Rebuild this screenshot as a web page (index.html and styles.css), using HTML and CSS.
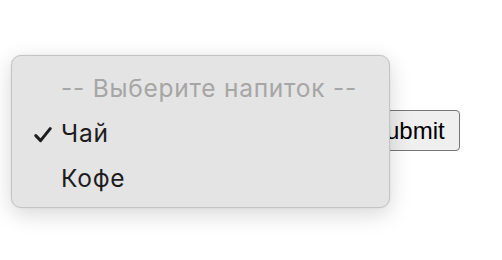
FILE: index.html
```html
<!DOCTYPE html>
<html lang="ru">
<head>
<meta charset="utf-8">
<title>Напиток</title>
<link rel="stylesheet" href="styles.css">
</head>
<body>
<form class="form">
  <div class="select-box"></div>
  <button type="button" class="submit">Submit</button>
</form>
<div class="menu" role="listbox">
  <div class="option placeholder"><span class="mark"></span><span class="label">-- Выберите напиток --</span></div>
  <div class="option"><span class="mark"><svg viewBox="0 0 18 16" width="18" height="16"><path d="M1.8 8.6 L6.6 13.6 L16.2 1.6" fill="none" stroke="#1d1d1d" stroke-width="3" stroke-linecap="round" stroke-linejoin="round"/></svg></span><span class="label">Чай</span></div>
  <div class="option"><span class="mark"></span><span class="label">Кофе</span></div>
</div>
</body>
</html>
```
FILE: styles.css
```css
html, body {
  margin: 0;
  background: #ffffff;
}
body {
  width: 502px;
  height: 260px;
  position: relative;
  overflow: hidden;
  font-family: Inter, "Noto Sans", sans-serif;
}
.form {
  display: flex;
  align-items: center;
  padding: 110px 0 0 12px;
  gap: 6px;
}
.select-box {
  width: 337px;
  height: 41px;
}
.submit {
  box-sizing: border-box;
  height: 41px;
  padding: 0 14px 0 14px;
  border: 1.5px solid #767676;
  border-radius: 4px;
  background: #efefef;
  color: #000;
  font-family: "Liberation Sans", Arial, sans-serif;
  font-size: 24px;
}
.menu {
  position: absolute;
  left: 11px;
  top: 55px;
  width: 379px;
  height: 153px;
  box-sizing: border-box;
  padding: 10px 0 6px 0;
  background: #e4e4e4;
  border: 1px solid #c4c4c4;
  border-radius: 10px;
  box-shadow: 0 6px 22px rgba(0, 0, 0, 0.16), 0 0 2px rgba(0, 0, 0, 0.08);
}
.option {
  display: flex;
  align-items: center;
  height: 45px;
  line-height: 45px;
  font-size: 24.5px;
  letter-spacing: 0.75px;
  color: #1d1d1d;
}
.mark {
  width: 49px;
  display: flex;
  justify-content: flex-end;
  padding-right: 9px;
  box-sizing: border-box;
}
.mark svg {
  display: block;
  margin-top: 2px;
}
.placeholder {
  color: #a6a6a6;
}
```
